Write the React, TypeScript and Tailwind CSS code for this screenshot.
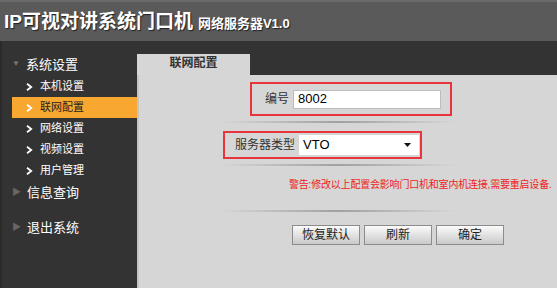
import { useState } from "react";

const cjk = { fontFamily: '"Liberation Sans", "Noto Sans CJK SC", sans-serif' };

const subItems = ["本机设置", "联网配置", "网络设置", "视频设置", "用户管理"];

function Chevron() {
  return (
    <svg width="7" height="8" viewBox="0 0 7 8" className="shrink-0">
      <path d="M1 0.8 L5.2 4 L1 7.2" fill="none" stroke="currentColor" strokeWidth="1.8" />
    </svg>
  );
}

function Separator() {
  return (
    <div className="ml-[83px] h-[2px] w-[234px] bg-gradient-to-r from-transparent via-[#a0a0a0] to-transparent" />
  );
}

export default function App() {
  const [active] = useState("联网配置");
  const [num, setNum] = useState("8002");

  return (
    <div className="flex h-[288px] w-[557px] flex-col overflow-hidden bg-[#333333]" style={cjk}>
      <div className="flex h-[41px] items-center gap-[5px] border-t-2 border-[#6a6a6a] bg-[#5a5a5a] pl-[4px]">
        <span className="text-[19px] font-bold leading-none text-white [text-shadow:1px_1px_1px_#222]">
          IP可视对讲系统门口机
        </span>
        <span className="mt-[3px] text-[13px] font-bold leading-none text-white [text-shadow:1px_1px_1px_#222]">
          网络服务器V1.0
        </span>
      </div>

      <div className="flex flex-1">
        <div className="w-[137px] shrink-0 border-l-2 border-[#2a2a2a] bg-[#333333] pt-[14px] text-white">
          <div className="flex h-[18px] items-center gap-[6px] pl-[10px]">
            <span className="text-[8px] leading-none text-[#777]">▼</span>
            <span className="text-[13px] leading-none">系统设置</span>
          </div>
          <div className="mt-[3px]">
            {subItems.map((s) => (
              <div
                key={s}
                className={
                  s === active
                    ? "ml-[10px] flex h-[21px] items-center gap-[7px] bg-[#f8a830] pl-[14px] text-[#222]"
                    : "ml-[10px] flex h-[21px] items-center gap-[7px] pl-[14px] text-white"
                }
              >
                <span className="text-white">
                  <Chevron />
                </span>
                <span className="text-[11px] leading-none">{s}</span>
              </div>
            ))}
          </div>
          <div className="mt-[1px] flex h-[20px] items-center gap-[6px] pl-[10px]">
            <span className="text-[9px] leading-none text-[#666]">▶</span>
            <span className="text-[13px] leading-none">信息查询</span>
          </div>
          <div className="mt-[15px] flex h-[20px] items-center gap-[6px] pl-[10px]">
            <span className="text-[9px] leading-none text-[#666]">▶</span>
            <span className="text-[13px] leading-none">退出系统</span>
          </div>
        </div>

        <div className="flex flex-1 flex-col">
          <div className="flex h-[34px] items-end bg-[#333333]">
            <div className="flex h-[21px] w-[113px] items-start justify-center bg-[#d6d6d6] pt-[3px] text-[12px] font-bold leading-none text-[#333]">
              联网配置
            </div>
          </div>
          <div className="flex-1 border-l-2 border-[#c4c4c4] bg-[#d6d6d6] pt-[7px]">
            <div className="ml-[111px] flex h-[34px] w-[202px] items-center border-2 border-[#e8343c] pl-[13px]">
              <span className="text-[12px] text-[#333]">编号</span>
              <input
                value={num}
                onChange={(e) => setNum(e.target.value)}
                className="ml-[4px] h-[19px] w-[148px] border border-[#bdbdbd] bg-white px-[4px] text-[13px] text-black outline-none"
              />
            </div>
            <div className="mt-[5px]">
              <Separator />
            </div>
            <div className="ml-[84px] mt-[8px] flex h-[28px] w-[199px] items-center border-2 border-[#e8343c] pl-[10px]">
              <span className="text-[12px] text-[#333]">服务器类型</span>
              <div className="ml-[4px] flex h-[20px] w-[120px] items-center justify-between bg-white pl-[4px] pr-[8px]">
                <span className="text-[13px] text-black">VTO</span>
                <svg width="7" height="4" viewBox="0 0 7 4">
                  <path d="M0 0 H7 L3.5 4 Z" fill="#111" />
                </svg>
              </div>
            </div>
            <div className="mt-[5px]">
              <Separator />
            </div>
            <div className="ml-[150px] mt-[14px] whitespace-nowrap text-[10px] leading-none tracking-[-0.2px] text-[#ee1c24]">
              警告:修改以上配置会影响门口机和室内机连接,需要重启设备.
            </div>
            <div className="mt-[20px]">
              <Separator />
            </div>
            <div className="ml-[153px] mt-[13px] flex gap-[4px]">
              {["恢复默认", "刷新", "确定"].map((b) => (
                <button
                  key={b}
                  className="h-[20px] w-[68px] border border-[#8c8c8c] bg-gradient-to-b from-[#fbfbfb] to-[#c9c9c9] text-[12px] leading-none text-[#222]"
                >
                  {b}
                </button>
              ))}
            </div>
          </div>
        </div>
      </div>
    </div>
  );
}
